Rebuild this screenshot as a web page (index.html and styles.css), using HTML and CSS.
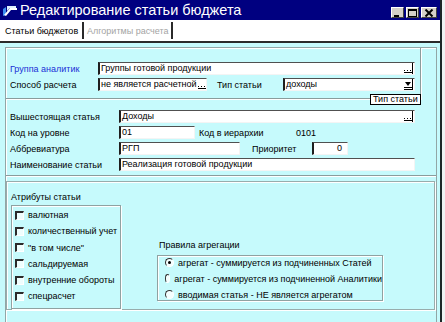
FILE: index.html
```html
<!DOCTYPE html>
<html lang="ru">
<head>
<meta charset="utf-8">
<title>Редактирование статьи бюджета</title>
<link rel="stylesheet" href="styles.css">
</head>
<body>
<div class="window">
  <div class="titlebar">
    <svg class="app-icon" width="15" height="14" viewBox="0 0 15 14">
      <path d="M1 6 L4 4 L4 12 L1 13 Z" fill="#3d8ef0"/>
      <path d="M2 12 L8 5 L15 5 L15 7 L9 7 L4 13 Z" fill="#ffffff"/>
      <path d="M5 3 L14 3 L14 5 L8 5 L5 8 Z" fill="#dfefff"/>
    </svg>
    <span class="title">Редактирование статьи бюджета</span>
    <div class="ctrls">
      <span class="btn"><svg width="11" height="8" viewBox="0 0 11 8"><rect x="2" y="6" width="5" height="2" fill="#000"/></svg></span>
      <span class="btn"><svg width="11" height="8" viewBox="0 0 11 8"><rect x="1.5" y="0.5" width="8" height="7" fill="none" stroke="#000"/><rect x="1" y="0" width="9" height="2" fill="#000"/></svg></span>
      <span class="btn btn-close"><svg width="14" height="8" viewBox="0 0 14 8"><path d="M3.5 0.5 L10.5 7.5 M10.5 0.5 L3.5 7.5" stroke="#000" stroke-width="2"/></svg></span>
    </div>
  </div>
  <div class="tabs">
    <span class="tab tab-active">Статьи бюджетов</span>
    <span class="tab-sep"></span>
    <span class="tab tab-off">Алгоритмы расчета</span>
    <span class="tab-sep"></span>
  </div>
  <div class="content">
    <div class="panel">
      <div class="sec1">
        <div class="row">
          <span class="lbl lbl-a lbl-blue">Группа аналитик</span>
          <span class="field w-group">Группы готовой продукции<span class="dots"><svg width="10" height="11" viewBox="0 0 10 11"><rect x="1" y="7" width="1" height="1" fill="#000"/><rect x="4" y="7" width="1" height="1" fill="#000"/><rect x="7" y="7" width="1" height="1" fill="#000"/><rect x="1" y="9" width="8" height="1" fill="#000"/><rect x="9" y="0" width="1" height="11" fill="#000"/></svg></span></span>
        </div>
        <div class="row">
          <span class="lbl lbl-a">Способ расчета</span>
          <span class="field w-method">не является расчетной<span class="dots"><svg width="10" height="11" viewBox="0 0 10 11"><rect x="1" y="7" width="1" height="1" fill="#000"/><rect x="4" y="7" width="1" height="1" fill="#000"/><rect x="7" y="7" width="1" height="1" fill="#000"/><rect x="1" y="9" width="8" height="1" fill="#000"/><rect x="9" y="0" width="1" height="11" fill="#000"/></svg></span></span>
          <span class="lbl lbl-type">Тип статьи</span>
          <span class="field w-type">доходы<span class="dots"><svg width="10" height="11" viewBox="0 0 10 11"><path d="M2 3 L8 3 L5 7 Z" fill="#000"/><rect x="1" y="8" width="8" height="1" fill="#000"/><rect x="9" y="0" width="1" height="11" fill="#000"/><rect x="1" y="10" width="9" height="1" fill="#000"/></svg></span></span>
        </div>
        <div class="tooltip">Тип статьи</div>
      </div>
      <div class="sec2">
        <div class="row">
          <span class="lbl lbl-b">Вышестоящая статья</span>
          <span class="field w-wide">Доходы<span class="dots"><svg width="10" height="11" viewBox="0 0 10 11"><rect x="1" y="7" width="1" height="1" fill="#000"/><rect x="4" y="7" width="1" height="1" fill="#000"/><rect x="7" y="7" width="1" height="1" fill="#000"/><rect x="1" y="9" width="8" height="1" fill="#000"/><rect x="9" y="0" width="1" height="11" fill="#000"/></svg></span></span>
        </div>
        <div class="row">
          <span class="lbl lbl-b">Код на уровне</span>
          <span class="field w-code">01</span>
          <span class="lbl lbl-hier">Код в иерархии</span>
          <span class="value">0101</span>
        </div>
        <div class="row">
          <span class="lbl lbl-b">Аббревиатура</span>
          <span class="field w-abbr">РГП</span>
          <span class="lbl lbl-prio">Приоритет</span>
          <span class="field w-prio">0</span>
        </div>
        <div class="row">
          <span class="lbl lbl-b">Наименование статьи</span>
          <span class="field w-wide">Реализация готовой продукции</span>
        </div>
      </div>
      <div class="sec3">
        <div class="col-attr">
          <div class="grp-title">Атрибуты статьи</div>
          <div class="box box-attr">
            <div class="item"><span class="chk"></span>валютная</div>
            <div class="item"><span class="chk"></span>количественный учет</div>
            <div class="item"><span class="chk"></span>"в том числе"</div>
            <div class="item"><span class="chk"></span>сальдируемая</div>
            <div class="item"><span class="chk"></span>внутренние обороты</div>
            <div class="item"><span class="chk"></span>спецрасчет</div>
          </div>
        </div>
        <div class="col-agg">
          <div class="grp-title grp-title-agg">Правила агрегации</div>
          <div class="box box-agg">
            <div class="item"><span class="radio radio-on"></span>агрегат - суммируется из подчиненных Статей</div>
            <div class="item"><span class="radio"></span>агрегат - суммируется из подчиненной Аналитики</div>
            <div class="item"><span class="radio"></span>вводимая статья - НЕ является агрегатом</div>
          </div>
        </div>
      </div>
    </div>
  </div>
</div>
</body>
</html>
```
FILE: styles.css
```css
* { box-sizing: border-box; }

body {
  margin: 0;
  width: 445px;
  height: 322px;
  overflow: hidden;
  background: #eef2f2;
  font-family: "Liberation Sans", Arial, sans-serif;
  font-size: 9px;
  color: #000;
}

.window {
  width: 442px;
  height: 322px;
  background: #c6fafc;
  border-right: 2px solid #1c2626;
  display: flex;
  flex-direction: column;
}

.titlebar {
  height: 20px;
  flex: none;
  background: #000080;
  display: flex;
  align-items: flex-start;
}

.app-icon { margin: 3px 0 0 2px; flex: none; }

.title {
  color: #fff;
  font-size: 14.5px;
  line-height: 20px;
  margin-left: 3px;
}

.ctrls {
  margin-left: auto;
  margin-top: 7px;
  margin-right: 3px;
  display: flex;
  gap: 2px;
}

.btn {
  width: 13px;
  height: 11px;
  background: #d4d0c8;
  border: 1px solid;
  border-color: #fff #404040 #404040 #fff;
  display: flex;
  align-items: center;
  justify-content: center;
}

.btn-close { width: 16px; }

.tabs {
  height: 23px;
  flex: none;
  background: #fff;
  border-bottom: 2px solid #2a2a2a;
  display: flex;
  align-items: center;
  padding-left: 5px;
}

.tab { font-size: 9px; white-space: nowrap; }
.tab-active { width: 77px; color: #000; }
.tab-off { width: 87px; padding-left: 3px; color: #a4a4a4; }

.tab-sep {
  width: 2px;
  height: 17px;
  background: #2a2a2a;
}

.content {
  flex: 1;
  padding: 4px 3px 0 5px;
  min-height: 0;
}

.panel {
  width: 432px;
  height: 100%;
  border: 1px solid #92a6a6;
  border-bottom: none;
  box-shadow: inset 1px 1px 0 #fff;
}

.row {
  display: flex;
  align-items: center;
  height: 13px;
}

.row + .row { margin-top: 3px; }

.lbl { white-space: nowrap; flex: none; }
.lbl-a { width: 88px; }
.lbl-b { width: 109px; }
.lbl-blue { color: #1a2fd6; }
.lbl-type { margin-left: 10px; width: 66px; }
.lbl-hier { margin-left: 4px; width: 97px; }
.lbl-prio { margin-left: 12px; width: 60px; }

.value { white-space: nowrap; }

.field {
  flex: none;
  height: 13px;
  background: #fff;
  border-top: 1px solid #505050;
  border-left: 2px solid #1e1e1e;
  border-right: 1px solid #f4f4f4;
  border-bottom: 1px solid #f4f4f4;
  display: flex;
  align-items: center;
  padding-left: 1px;
  line-height: 11px;
  white-space: nowrap;
  overflow: hidden;
}

.dots {
  margin-left: auto;
  margin-right: 1px;
  height: 11px;
  display: flex;
}

.w-group { width: 317px; }
.w-method { width: 109px; }
.w-type { width: 132px; }
.w-wide { width: 296px; }
.w-code { width: 76px; }
.w-abbr { width: 121px; }
.w-prio { width: 36px; justify-content: flex-end; padding-right: 5px; }

.sec1 {
  position: relative;
  width: 415px;
  padding: 14px 0 7px 4px;
  border-right: 1px solid #8a9c9c;
  border-bottom: 1px solid #8a9c9c;
  box-shadow: 1px 1px 0 #fff;
}

.tooltip {
  position: absolute;
  left: 364px;
  top: 46px;
  height: 11px;
  padding: 0 2px;
  background: #fff;
  border: 1px solid #000;
  font-size: 9px;
  line-height: 9px;
  white-space: nowrap;
}

.sec2 {
  padding: 11px 0 4px 4px;
  border-bottom: 1px solid #8a9c9c;
  box-shadow: 0 1px 0 #fff;
}

.sec3 {
  margin: 5px 1px 0 0;
  height: 129px;
  border: 1px solid #98acac;
  box-shadow: inset 1px 1px 0 #fff, 1px 1px 0 #fff;
  display: flex;
  padding: 9px 0 0 4px;
}

.grp-title {
  height: 12px;
  line-height: 12px;
  margin-bottom: 2px;
  white-space: nowrap;
}

.grp-title-agg { margin-bottom: 4px; padding-left: 2px; }

.box {
  border: 1px solid #8fa2a2;
  box-shadow: inset 1px 1px 0 #fff, 1px 1px 0 #fff;
  display: flex;
  flex-direction: column;
}

.box-attr {
  width: 110px;
  height: 104px;
  padding: 3px 0 0 3px;
  gap: 4.3px;
}

.col-agg { margin: 48px 0 0 36px; }

.box-agg {
  width: 226px;
  height: 46px;
  padding: 1px 0 0 7px;
  gap: 5px;
}

.item {
  display: flex;
  align-items: center;
  height: 12px;
  white-space: nowrap;
}

.box-agg .item { height: 11px; }

.chk {
  width: 9px;
  height: 9px;
  margin-right: 4px;
  background: #effefe;
  border-top: 2px solid #2a2a2a;
  border-left: 2px solid #2a2a2a;
  border-right: 1px solid #fff;
  border-bottom: 1px solid #fff;
}

.radio {
  width: 9px;
  height: 9px;
  margin-right: 4px;
  border-radius: 50%;
  background: #f4ffff;
  border: 1px solid;
  border-color: #333 #fff #fff #333;
  display: flex;
  align-items: center;
  justify-content: center;
}

.radio-on::after {
  content: "";
  width: 3px;
  height: 3px;
  border-radius: 50%;
  background: #000;
}
```
